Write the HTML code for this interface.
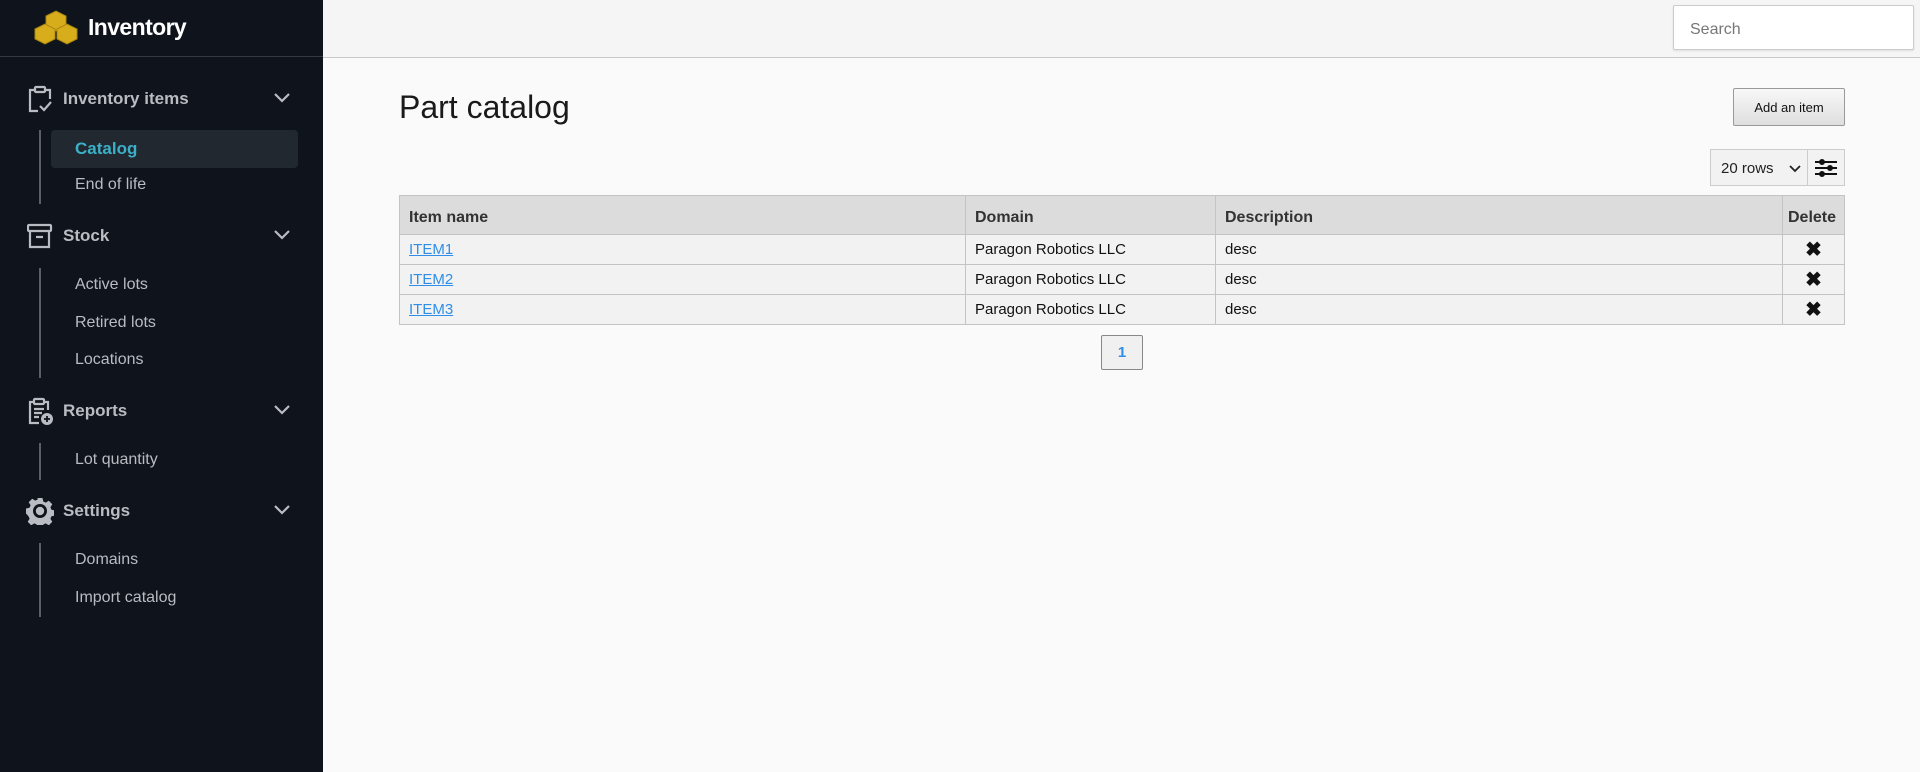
<!DOCTYPE html>
<html><head><meta charset="utf-8"><style>
*{box-sizing:border-box;margin:0;padding:0}
body{width:1920px;height:772px;overflow:hidden;font-family:"Liberation Sans",sans-serif;background:#fafafa;position:relative}
.side{position:absolute;left:0;top:0;width:323px;height:772px;background:#0e131c;color:#b9bcc2}
.brand{height:57px;border-bottom:1px solid #343a44;position:relative}
.brand .t{position:absolute;left:88px;top:14px;font-size:23px;color:#fff;font-weight:bold;letter-spacing:-0.6px}
.sec{position:absolute;left:0;width:323px;height:30px}
.sec .lbl{position:absolute;left:63px;top:6px;font-size:17px;font-weight:bold;color:#b9bcc2}
.sec svg.ic{position:absolute;left:27px;top:2px}
.sec svg.ch{position:absolute;left:274px;top:10px}
.vl{position:absolute;left:39px;width:2px;background:#5a5f68}
.sub{position:absolute;left:75px;font-size:16px;color:#b9bcc2}
.act{position:absolute;left:51px;top:130px;width:247px;height:38px;background:#22282f;border-radius:4px}
.hdr{position:absolute;left:323px;top:0;width:1597px;height:58px;background:#f5f5f5;border-bottom:1px solid #c8c8c8}
.search{position:absolute;left:1673px;top:5px;width:241px;height:45px;background:#fff;border:1px solid #ccc;border-radius:2px;box-shadow:0 1px 2px rgba(0,0,0,.1);font-size:16px;color:#777;padding:15px 0 0 16px}
h1{position:absolute;left:399px;top:89px;font-size:32px;font-weight:normal;color:#1a1a1a}
.btn{position:absolute;left:1733px;top:88px;width:112px;height:38px;border:1px solid #999;border-radius:2px;background:linear-gradient(#f8f8f8,#dedede);font-size:13px;text-align:center;line-height:38px;color:#111}
.sel{position:absolute;left:1710px;top:149px;width:98px;height:37px;border:1px solid #ccc;background:#f2f2f2;font-size:15px;color:#222;padding:10px 0 0 10px}
.flt{position:absolute;left:1807px;top:149px;width:38px;height:37px;border:1px solid #ccc;background:#f2f2f2}
table{position:absolute;left:399px;top:195px;width:1446px;border-collapse:collapse;font-size:15px;color:#111}
th{background:#dcdcdc;height:39px;text-align:left;padding:5px 9px 0;font-size:16px;color:#333;border:1px solid #c4c4c4}
td{background:#f2f2f2;height:30px;padding:0 9px;border:1px solid #c4c4c4}
td a{color:#2e8ee8}
.pg{position:absolute;left:1101px;top:335px;width:42px;height:35px;border:1px solid #888;border-radius:2px;background:#f0f0f0;color:#2e8ee8;font-weight:bold;font-size:15px;text-align:center;line-height:33px}
</style></head><body>
<div class="side">
 <div class="brand">
  <svg width="46" height="36" viewBox="0 0 46 36" style="position:absolute;left:34px;top:10px">
   <g fill="#d8ad1c" stroke="#a88510" stroke-width="1">
    <path d="M12 6 L22 1 L32 6 L32 16 L22 21 L12 16Z"/>
    <path d="M1 19 L11 14 L21 19 L21 29 L11 34 L1 29Z"/>
    <path d="M23 19 L33 14 L43 19 L43 29 L33 34 L23 29Z"/>
   </g>
  </svg>
  <div class="t">Inventory</div>
 </div>
 <div class="sec" style="top:83px">
  <svg class="ic" width="26" height="28" viewBox="0 0 26 28" fill="none" stroke="#b9bcc2" stroke-width="2.2"><path d="M7 5H3v21h8M19 5h4v9"/><rect x="8" y="2" width="10" height="5" rx="1"/><path d="M13 21l4 4 7-8"/></svg>
  <div class="lbl">Inventory items</div>
  <svg class="ch" width="16" height="10" viewBox="0 0 16 10" fill="none" stroke="#b9bcc2" stroke-width="2.2"><path d="M1 1l7 7 7-7"/></svg>
 </div>
 <div class="vl" style="top:130px;height:74px"></div>
 <div class="act"></div>
 <div class="sub" style="top:139px;color:#3bb0c8;font-weight:bold;font-size:17px">Catalog</div>
 <div class="sub" style="top:176px">End of life</div>
 <div class="sec" style="top:220px">
  <svg class="ic" width="26" height="28" viewBox="0 0 26 28" fill="none" stroke="#b9bcc2" stroke-width="2.2"><rect x="1" y="3" width="23" height="6" rx="1"/><path d="M3 9v16h19V9M9 15h7"/></svg>
  <div class="lbl">Stock</div>
  <svg class="ch" width="16" height="10" viewBox="0 0 16 10" fill="none" stroke="#b9bcc2" stroke-width="2.2"><path d="M1 1l7 7 7-7"/></svg>
 </div>
 <div class="vl" style="top:268px;height:110px"></div>
 <div class="sub" style="top:276px">Active lots</div>
 <div class="sub" style="top:314px">Retired lots</div>
 <div class="sub" style="top:351px">Locations</div>
 <div class="sec" style="top:395px">
  <svg class="ic" width="28" height="30" viewBox="0 0 28 30" fill="none" stroke="#b9bcc2" stroke-width="2.2"><path d="M7 5H3v21h9M17 5h4v8"/><rect x="7" y="2" width="10" height="5" rx="1"/><path d="M7 12h10M7 16h8M7 20h5"/><circle cx="20" cy="22" r="6" fill="#b9bcc2" stroke="none"/><path d="M20 19v6M17 22h6" stroke="#0e131c" stroke-width="1.8"/></svg>
  <div class="lbl">Reports</div>
  <svg class="ch" width="16" height="10" viewBox="0 0 16 10" fill="none" stroke="#b9bcc2" stroke-width="2.2"><path d="M1 1l7 7 7-7"/></svg>
 </div>
 <div class="vl" style="top:443px;height:37px"></div>
 <div class="sub" style="top:451px">Lot quantity</div>
 <div class="sec" style="top:495px">
  <svg class="ic" width="28" height="28" viewBox="0 0 28 28" style="left:26px"><path fill="#b9bcc2" d="M11.5 1h5l.8 3.5 2.4 1.1 3.1-1.9 3.5 3.5-1.9 3.1 1.1 2.4 3.5.8v5l-3.5.8-1.1 2.4 1.9 3.1-3.5 3.5-3.1-1.9-2.4 1.1-.8 3.5h-5l-.8-3.5-2.4-1.1-3.1 1.9-3.5-3.5 1.9-3.1-1.1-2.4L0 16.5v-5l3.5-.8 1.1-2.4-1.9-3.1 3.5-3.5 3.1 1.9 2.4-1.1z"/><circle cx="14" cy="14" r="7" fill="#0e131c"/><circle cx="14" cy="14" r="4.2" fill="#b9bcc2"/></svg>
  <div class="lbl">Settings</div>
  <svg class="ch" width="16" height="10" viewBox="0 0 16 10" fill="none" stroke="#b9bcc2" stroke-width="2.2"><path d="M1 1l7 7 7-7"/></svg>
 </div>
 <div class="vl" style="top:543px;height:74px"></div>
 <div class="sub" style="top:551px">Domains</div>
 <div class="sub" style="top:589px">Import catalog</div>
</div>
<div class="hdr"></div>
<div class="search">Search</div>
<h1>Part catalog</h1>
<div class="btn">Add an item</div>
<div class="sel">20 rows<svg width="12" height="8" viewBox="0 0 12 8" style="position:absolute;left:78px;top:15px" fill="none" stroke="#222" stroke-width="1.8"><path d="M1 1l5 5 5-5"/></svg></div>
<div class="flt"><svg width="22" height="18" viewBox="0 0 22 18" style="position:absolute;left:7px;top:9px" stroke="#111" stroke-width="2"><path d="M0 3h22M0 9h22M0 15h22"/><circle cx="7" cy="3" r="2" fill="#111"/><circle cx="15" cy="9" r="2" fill="#111"/><circle cx="7" cy="15" r="2" fill="#111"/></svg></div>
<table>
<tr><th style="width:566px">Item name</th><th style="width:250px">Domain</th><th style="width:567px">Description</th><th style="padding:5px 5px 0">Delete</th></tr>
<tr><td><a href="#">ITEM1</a></td><td>Paragon Robotics LLC</td><td>desc</td><td style="text-align:center;font-size:20px;font-weight:bold">✖</td></tr>
<tr><td><a href="#">ITEM2</a></td><td>Paragon Robotics LLC</td><td>desc</td><td style="text-align:center;font-size:20px;font-weight:bold">✖</td></tr>
<tr><td><a href="#">ITEM3</a></td><td>Paragon Robotics LLC</td><td>desc</td><td style="text-align:center;font-size:20px;font-weight:bold">✖</td></tr>
</table>
<div class="pg">1</div>
</body></html>
